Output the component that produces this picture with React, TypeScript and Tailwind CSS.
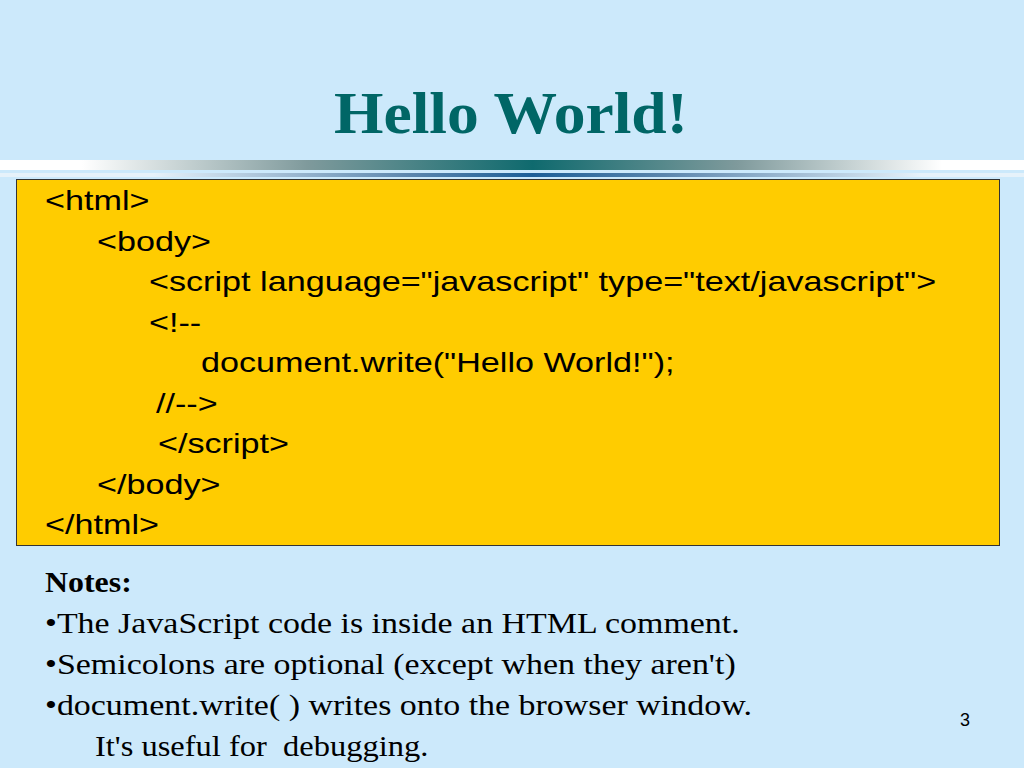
export default function App() {
  const code: [number, string][] = [
    [0, '<html>'],
    [52, '<body>'],
    [104, '<script language="javascript" type="text/javascript">'],
    [104, '<!--'],
    [156, 'document.write("Hello World!");'],
    [111, '//-->'],
    [113, '</script>'],
    [52, '</body>'],
    [0, '</html>'],
  ];
  const notes = [
    '•The JavaScript code is inside an HTML comment.',
    "•Semicolons are optional (except when they aren't)",
    '•document.write( ) writes onto the browser window.',
  ];
  return (
    <div className="w-[1024px] h-[768px] bg-[#cce9fb] relative overflow-hidden flex flex-col">
      <div className="h-[160px] flex items-start justify-center pt-[78px]">
        <h1 className="text-[60px] leading-[70px] font-bold text-[#006666] scale-x-[1.06] ml-[-2px]" style={{ fontFamily: '"Liberation Serif", serif' }}>Hello World!</h1>
      </div>
      <div className="h-[10px] bg-[linear-gradient(90deg,#ffffff_0%,#ffffff_8%,#7f9a9c_30%,#0f6a6e_52%,#7f9a9c_72%,#ffffff_92%,#ffffff_100%)]" />
      <div className="h-[3px]" />
      <div className="h-[4px] bg-[linear-gradient(90deg,#e6f2fa_0%,#e6f2fa_15%,#5b86ad_40%,#1d5f97_52%,#5b86ad_65%,#e6f2fa_90%,#e6f2fa_100%)]" />
      <div className="h-[2px]" />
      <div className="ml-[16px] w-[984px] h-[367px] bg-[#ffcc00] border border-[#333] pt-[1px] pl-[28px]" style={{ fontFamily: '"Liberation Sans", sans-serif' }}>
        {code.map(([ind, t], i) => (
          <div key={i} className="text-[28px] leading-[40.5px] text-black whitespace-pre" style={{ paddingLeft: ind }}>
            <span className="inline-block origin-left scale-x-[1.22]">{t}</span>
          </div>
        ))}
      </div>
      <div className="pl-[45px] pt-[16px] text-[29px] leading-[41px] text-black" style={{ fontFamily: '"Liberation Serif", serif' }}>
        <div className="font-bold"><span className="inline-block origin-left scale-x-[1.1]">Notes:</span></div>
        {notes.map((n) => (
          <div key={n}><span className="inline-block origin-left scale-x-[1.17] whitespace-pre">{n}</span></div>
        ))}
        <div className="pl-[50px]"><span className="inline-block origin-left scale-x-[1.12] whitespace-pre">It's useful for  debugging.</span></div>
      </div>
      <div className="absolute left-[960px] top-[707px] text-[18px] text-black" style={{ fontFamily: '"Liberation Sans", sans-serif' }}>3</div>
    </div>
  );
}
